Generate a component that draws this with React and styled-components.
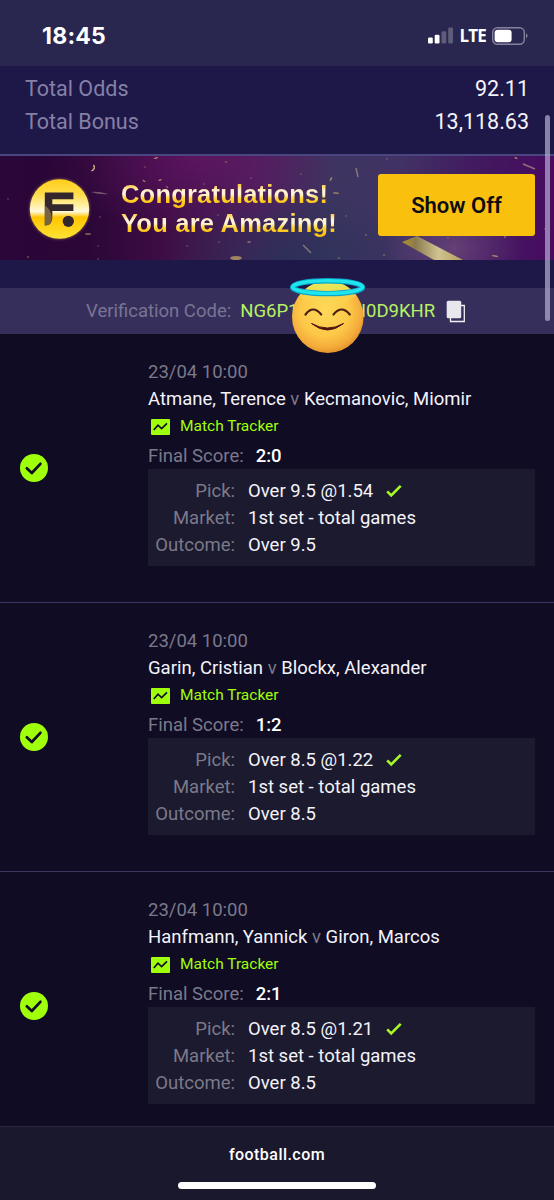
import React from "react";
import styled, { createGlobalStyle } from "styled-components";

const GlobalStyle = createGlobalStyle`
  * { box-sizing: border-box; }
  body { margin: 0; background: #0f0c24; }
`;

const Screen = styled.div`
  position: relative;
  display: flex;
  flex-direction: column;
  width: 554px;
  height: 1200px;
  overflow: hidden;
  background: #0f0c24;
  color: #f4f3fa;
  font-family: Roboto, "Liberation Sans", sans-serif;
  font-size: 18.5px;
  line-height: 27px;
  letter-spacing: 0;
  white-space: nowrap;
`;

const StatusBar = styled.header`
  flex: none;
  display: flex;
  justify-content: space-between;
  align-items: center;
  height: 66px;
  padding: 5px 26px 0 42px;
  background: #29264f;
`;

const Clock = styled.span`
  font: 700 23px/28px Inter, sans-serif;
  letter-spacing: 0.25px;
  color: #fff;
`;

const StatusIcons = styled.div`
  display: flex;
  align-items: center;
  gap: 6px;
`;

const Network = styled.span`
  font: 700 17px/22px "Open Sans", sans-serif;
  letter-spacing: -0.8px;
  color: #fff;
`;

const Totals = styled.section`
  flex: none;
  height: 90px;
  padding: 6px 25px 0;
  background: #1e1849;
  border-bottom: 2px solid #4a4780;
`;

const TotalRow = styled.div`
  display: flex;
  justify-content: space-between;
  height: 33px;
  font-size: 21.5px;
  line-height: 34px;
`;

const Muted = styled.span`
  color: ${(p) => p.$tone || "#7b798a"};
`;

const Banner = styled.section`
  position: relative;
  flex: none;
  display: flex;
  align-items: flex-start;
  height: 104px;
  padding: 0 19px 0 29px;
  background:
    radial-gradient(ellipse 70px 50px at 455px 92px, rgba(150, 110, 150, 0.4), transparent),
    radial-gradient(ellipse 150px 80px at 200px 0, rgba(108, 22, 108, 0.6), transparent),
    radial-gradient(ellipse 130px 70px at 290px 104px, rgba(38, 50, 88, 0.75), transparent),
    linear-gradient(90deg, #2a0639 0, #2b0737 90px, #3d0c44 160px, #482058 255px, #3c3560 330px, #413264 400px, #41195f 480px, #480b60 554px);
`;

const Confetti = styled.svg`
  position: absolute;
  inset: 0;
`;

const LogoMark = styled.svg`
  position: relative;
  flex: none;
  margin-top: 22px;
  filter: drop-shadow(0 0 1.5px rgba(235, 190, 90, 0.6));
`;

const BannerText = styled.div`
  position: relative;
  margin: 24px 0 0 30px;
  flex: 1;
`;

const BannerLine = styled.div`
  width: max-content;
  font: 700 25.5px/29px "Liberation Sans", Arial, sans-serif;
  letter-spacing: ${(p) => p.$spacing};
  color: transparent;
  background: linear-gradient(#ffcf4d 18%, #fff3d8 38%, #fff3d0 50%, #ffd53a 64%, #ffc414 80%);
  background-clip: text;
`;

const ShowOff = styled.button`
  position: relative;
  flex: none;
  width: 157px;
  height: 62px;
  margin-top: 18px;
  border: 0;
  border-radius: 3px;
  background: #f9c10e;
  color: #0d0b14;
  font: 600 22px/63px Roboto, sans-serif;
  padding: 0;
`;

const Verification = styled.section`
  position: relative;
  flex: none;
  display: flex;
  align-items: center;
  height: 74px;
  padding: 28px 0 0 86px;
  background: linear-gradient(#1e1849 28px, #362f5b 28px);
`;

const Code = styled.span`
  width: ${(p) => p.$width}px;
  text-align: ${(p) => p.$align || "left"};
  margin-left: ${(p) => p.$gap || 0}px;
  color: #b7f262;
`;

const CopyIcon = styled.svg`
  margin-left: 11px;
`;

const Halo = styled.svg`
  position: absolute;
  left: 288px;
  top: 16px;
  z-index: 1;
`;

const Matches = styled.main`
  flex: 1;
  min-height: 0;
  overflow: hidden;
`;

const MatchRow = styled.article`
  display: flex;
  align-items: center;
  height: 269px;
  padding: 0 19px 0 20px;
  border-bottom: 1px solid #3a3760;
`;

const Status = styled.div`
  width: 128px;
  height: 28px;
`;

const Details = styled.div`
  flex: 1;
  display: flex;
  flex-direction: column;
  height: 244px;
  margin-top: 12px;
  padding-top: 7px;
`;

const Line = styled.div`
  height: ${(p) => p.$height || 27}px;
`;

const Tracker = styled.div`
  display: flex;
  align-items: center;
  gap: 10px;
  height: 27px;
  margin-bottom: 3px;
  padding-left: 3px;
  color: #a0ff0a;
  font-size: 15.5px;
`;

const Score = styled.span`
  margin-left: 12px;
  color: #fff;
  font-weight: 500;
`;

const Panel = styled.dl`
  display: grid;
  grid-template-columns: 87px 1fr;
  grid-auto-rows: 27px;
  column-gap: 13px;
  height: 97px;
  margin: 0;
  padding-top: 9px;
  background: #1c1a2e;
`;

const Term = styled.dt`
  text-align: right;
  color: #7b798a;
`;

const Value = styled.dd`
  display: flex;
  align-items: center;
  gap: 12px;
  margin: 0;
`;

const BrowserBar = styled.footer`
  flex: none;
  display: flex;
  flex-direction: column;
  align-items: center;
  height: 74px;
  padding-top: 14px;
  background: #1a182d;
  border-top: 1px solid #292740;
`;

const Domain = styled.span`
  font-size: 16px;
  font-weight: 500;
  letter-spacing: 0.45px;
  color: #fff;
`;

const HomeIndicator = styled.div`
  width: 198px;
  height: 7px;
  margin-top: 14px;
  border-radius: 4px;
  background: #fff;
`;

const Scrollbar = styled.div`
  position: absolute;
  right: 4px;
  top: 115px;
  width: 5px;
  height: 206px;
  border-radius: 3px;
  background: rgba(190, 185, 215, 0.66);
  z-index: 2;
`;

const matches = [
  { home: "Atmane, Terence", away: "Kecmanovic, Miomir", score: "2:0", pick: "Over 9.5", odds: "1.54" },
  { home: "Garin, Cristian", away: "Blockx, Alexander", score: "1:2", pick: "Over 8.5", odds: "1.22" },
  { home: "Hanfmann, Yannick", away: "Giron, Marcos", score: "2:1", pick: "Over 8.5", odds: "1.21" },
];

const flecks = [
  [156, 2, 4, -15], [226, 6, 2, 0], [145, 11, 1, 0], [160, 24, 3, -20],
  [144, 25, 3, 40], [251, 22, 1, 0], [167, 31, 2, 30], [204, 28, 1, 0], [98, 103, 1, 0],
  [28, 101, 2, 0], [8, 43, 1, 0], [88, 78, 6, 0], [98, 90, 1, 0], [187, 90, 1, 0],
  [249, 86, 3, 0], [219, 86, 1, 0], [236, 102, 11, 0], [218, 59, 1, 0], [339, 102, 2, 0],
  [384, 99, 2, 0], [366, 79, 2, 0], [336, 37, 6, 5], [387, 3, 1, 0], [301, 18, 1, 0],
  [331, 23, 4, -60], [495, 100, 6, 8], [516, 2, 3, 20], [545, 73, 1, 0], [448, 82, 1, 0],
  [505, 81, 2, -60], [100, 61, 1, 0], [346, 60, 1, 0],
];

function CheckBadge() {
  return (
    <svg width="28" height="28" viewBox="0 0 28 28">
      <circle cx="14" cy="14" r="14" fill="#a0ff0a" />
      <path d="M6.8 14.3 11.8 19 20.4 9.8" fill="none" stroke="#0f0c24" strokeWidth="2.7" strokeLinecap="round" strokeLinejoin="round" />
    </svg>
  );
}

function Match({ match }) {
  return (
    <MatchRow>
      <Status><CheckBadge /></Status>
      <Details>
        <Line><Muted>23/04 10:00</Muted></Line>
        <Line>{match.home} <Muted>v</Muted> {match.away}</Line>
        <Tracker>
          <svg width="19" height="16" viewBox="0 0 19 16">
            <rect width="19" height="16" rx="1" fill="#a0ff0a" />
            <path d="M2.8 11 7 6.2 10.6 9.6 16 4.4" fill="none" stroke="#0f0c24" strokeWidth="1.6" />
          </svg>
          Match Tracker
        </Tracker>
        <Line $height={26}><Muted>Final Score:</Muted><Score>{match.score}</Score></Line>
        <Panel>
          <Term>Pick:</Term>
          <Value>
            {match.pick} @{match.odds}
            <svg width="18" height="14" viewBox="0 0 18 14">
              <path d="M2.2 6.4 6.2 10.4 15.7 .9" fill="none" stroke="#a8f825" strokeWidth="2.6" />
            </svg>
          </Value>
          <Term>Market:</Term>
          <Value>1st set - total games</Value>
          <Term>Outcome:</Term>
          <Value>{match.pick}</Value>
        </Panel>
      </Details>
    </MatchRow>
  );
}

function AngelFace() {
  return (
    <Halo width="80" height="82" viewBox="0 0 80 82">
      <defs>
        <radialGradient id="face" cx="46%" cy="42%" r="62%">
          <stop offset="0" stopColor="#ffd95a" />
          <stop offset=".55" stopColor="#fdc848" />
          <stop offset=".82" stopColor="#f4ab3a" />
          <stop offset="1" stopColor="#dd8826" />
        </radialGradient>
        <linearGradient id="glow" x2="0" y2="1">
          <stop offset="0" stopColor="#e0f060" />
          <stop offset="1" stopColor="#f9e050" stopOpacity="0" />
        </linearGradient>
      </defs>
      <ellipse cx="39.8" cy="41" rx="35.8" ry="36" fill="url(#face)" />
      <path d="M11 20Q22 5 40 5T69 20Q56 30 40 30T11 20Z" fill="url(#glow)" />
      <ellipse cx="39.6" cy="11.2" rx="35" ry="6.4" fill="none" stroke="#0aa6c9" strokeWidth="5.4" />
      <ellipse cx="39.6" cy="11" rx="35" ry="6.4" fill="none" stroke="#20e5ed" strokeWidth="3.4" />
      <path d="M17.5 38.5Q25 28.5 33.2 38.5M45.5 38.5Q53.5 28.5 61.8 38.5" fill="none" stroke="#4c2010" strokeWidth="2.2" strokeLinecap="round" />
      <path d="M23.5 47.5Q39.5 60.5 55.5 47.5Q39.5 56.5 23.5 47.5Z" fill="#4c140f" stroke="#4c140f" strokeWidth="1" strokeLinejoin="round" />
    </Halo>
  );
}

export default function App() {
  return (
    <Screen>
      <GlobalStyle />
      <StatusBar>
        <Clock>18:45</Clock>
        <StatusIcons>
          <svg width="25" height="17" viewBox="0 0 25 17" fill="#fff">
            <rect x="0" y="10.5" width="4.8" height="6" rx="1.3" />
            <rect x="6.7" y="7.8" width="4.8" height="8.7" rx="1.3" />
            <rect x="13.5" y="4.3" width="4.8" height="12.2" rx="1.3" opacity=".25" />
            <rect x="20.2" y="0.5" width="4.8" height="16" rx="1.3" opacity=".25" />
          </svg>
          <Network>LTE</Network>
          <svg width="36" height="18" viewBox="0 0 36 18">
            <rect x=".7" y=".7" width="31.6" height="16.6" rx="4.8" fill="none" stroke="#85839b" strokeWidth="1.4" />
            <rect x="2.6" y="2.8" width="17" height="12.4" rx="3" fill="#fff" />
            <path d="M34 6.2Q37.2 8.8 34 11.6Z" fill="#85839b" />
          </svg>
        </StatusIcons>
      </StatusBar>
      <Totals>
        <TotalRow><Muted $tone="#8580a6">Total Odds</Muted><span>92.11</span></TotalRow>
        <TotalRow><Muted $tone="#8580a6">Total Bonus</Muted><span>13,118.63</span></TotalRow>
      </Totals>
      <Banner>
        <Confetti width="554" height="104" viewBox="0 0 554 104">
          <defs>
            <linearGradient id="ribbon">
              <stop offset="0" stopColor="#b09329" />
              <stop offset=".22" stopColor="#8d7b50" />
              <stop offset=".6" stopColor="#d0c391" />
              <stop offset="1" stopColor="#b59e59" />
            </linearGradient>
          </defs>
          {flecks.map(([x, y, size, turn], i) => (
            <ellipse key={i} cx={x} cy={y} rx={size / 2 + 0.3} ry={size > 8 ? 2 : 0.8} fill="#c1a568" opacity={size < 3 ? 0.5 : 0.75} transform={`rotate(${turn} ${x} ${y})`} />
          ))}
          <path d="M93.5 9Q96 12.5 91.5 15" fill="none" stroke="#d9bd7a" strokeWidth="1.3" />
          <path d="M91 36Q99 35 108 38Q100 39 91 36Z" fill="#76516a" />
          <path d="M303 89 311 97M356 12 358 21M523 8 535 13" stroke="#b5a287" strokeWidth="1.4" opacity=".65" />
          <path d="M402 86 417 80 463 104H434Z" fill="url(#ribbon)" />
        </Confetti>
        <LogoMark width="62" height="62" viewBox="0 0 62 62">
          <defs>
            <linearGradient id="gold" x2="0" y2="1">
              <stop offset="0" stopColor="#ffce1b" />
              <stop offset=".25" stopColor="#ffdd49" />
              <stop offset=".45" stopColor="#fff0a8" />
              <stop offset=".54" stopColor="#fff9e0" />
              <stop offset=".64" stopColor="#ffc500" />
              <stop offset="1" stopColor="#ffe335" />
            </linearGradient>
          </defs>
          <circle cx="30.5" cy="31" r="29.7" fill="url(#gold)" />
          <path d="M15.8 14.5H44.4V21.2H23.3V26.3H44.4V33H23.3V40Q23 47.5 15.8 47.5Z" fill="#33262d" />
          <path d="M15.8 27.5Q23 32 22.8 41Q22 47.5 15.8 47.5Z" fill="#786441" />
          <circle cx="39.3" cy="43.3" r="5.6" fill="#33262d" />
        </LogoMark>
        <BannerText>
          <BannerLine $spacing="0.2px">Congratulations!</BannerLine>
          <BannerLine $spacing="0.22px">You are Amazing!</BannerLine>
        </BannerText>
        <ShowOff>Show Off</ShowOff>
      </Banner>
      <Verification>
        <Muted $tone="#797494">Verification Code:</Muted>
        <Code $width={60} $gap={9}>NG6P1</Code>
        <Code $width={135} $align="right">I0D9KHR</Code>
        <CopyIcon width="20" height="23" viewBox="0 0 20 23">
          <path d="M4.5 17.5V21.5H18.3V5.5H15" fill="none" stroke="#f1f0f5" strokeWidth="1.3" />
          <rect x=".7" y=".7" width="14.5" height="17.6" rx="1.5" fill="#e9e7ee" />
        </CopyIcon>
        <AngelFace />
      </Verification>
      <Matches>
        {matches.map((m) => <Match key={m.home} match={m} />)}
      </Matches>
      <BrowserBar>
        <Domain>football.com</Domain>
        <HomeIndicator />
      </BrowserBar>
      <Scrollbar />
    </Screen>
  );
}
